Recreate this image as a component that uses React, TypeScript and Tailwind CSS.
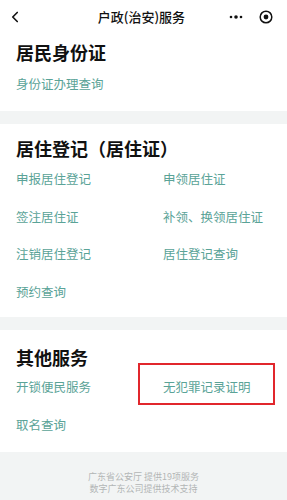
import { ChevronLeft } from "lucide-react";

const font = { fontFamily: '"Noto Sans CJK SC", "Noto Sans", sans-serif' };

function Title({ children }: { children: React.ReactNode }) {
  return <h2 className="text-[18px] font-bold text-[#111] leading-[26px]">{children}</h2>;
}

function Item({ label }: { label: string }) {
  return <div className="text-[12.5px] text-[#5aa397] leading-[18px]">{label}</div>;
}

export default function App() {
  return (
    <div className="w-[287px] h-[500px] bg-[#f2f4f4] overflow-hidden" style={font}>
      {/* header */}
      <div className="h-[33px] bg-white flex items-center justify-between pl-[6px] pr-[14px]">
        <ChevronLeft className="w-[18px] h-[18px] text-[#111]" strokeWidth={2.2} />
        <div className="text-[13px] font-medium text-[#111] ml-[30px]">户政(治安)服务</div>
        <div className="flex items-center gap-[16px]">
          <svg width="14" height="6" viewBox="0 0 14 6">
            <circle cx="2" cy="3" r="1.3" fill="#111" />
            <circle cx="7" cy="3" r="1.8" fill="#111" />
            <circle cx="12" cy="3" r="1.3" fill="#111" />
          </svg>
          <svg width="14" height="14" viewBox="0 0 14 14">
            <circle cx="7" cy="7" r="5.8" fill="none" stroke="#111" strokeWidth="1.5" />
            <circle cx="7" cy="7" r="2.4" fill="#111" />
          </svg>
        </div>
      </div>

      {/* 居民身份证 */}
      <div className="bg-white px-4 pt-[6px] h-[78px]">
        <Title>居民身份证</Title>
        <div className="mt-[10px]">
          <Item label="身份证办理查询" />
        </div>
      </div>

      {/* 居住登记 */}
      <div className="mt-[13px] h-[193px] bg-white px-4 pt-[11px]">
        <Title>居住登记（居住证）</Title>
        <div className="pt-[9px] grid grid-cols-[147px_1fr] gap-y-[19.5px]">
          <Item label="申报居住登记" />
          <Item label="申领居住证" />
          <Item label="签注居住证" />
          <Item label="补领、换领居住证" />
          <Item label="注销居住登记" />
          <Item label="居住登记查询" />
          <Item label="预约查询" />
        </div>
      </div>

      {/* 其他服务 */}
      <div className="mt-[13px] h-[122px] bg-white px-4 pt-[14px]">
        <Title>其他服务</Title>
        <div className="pt-[8px] grid grid-cols-[147px_1fr] gap-y-[20px]">
          <Item label="开锁便民服务" />
          <div className="relative">
            <Item label="无犯罪记录证明" />
            <div className="absolute left-[-25px] top-[-15px] w-[137px] h-[42px] border-2 border-[#e1262c]" />
          </div>
          <Item label="取名查询" />
        </div>
      </div>

      {/* footer */}
      <div className="pt-[19px] text-center text-[9px] leading-[12px] text-[#b3b6b6]">
        <div>广东省公安厅 提供19项服务</div>
        <div>数字广东公司提供技术支持</div>
      </div>
    </div>
  );
}
